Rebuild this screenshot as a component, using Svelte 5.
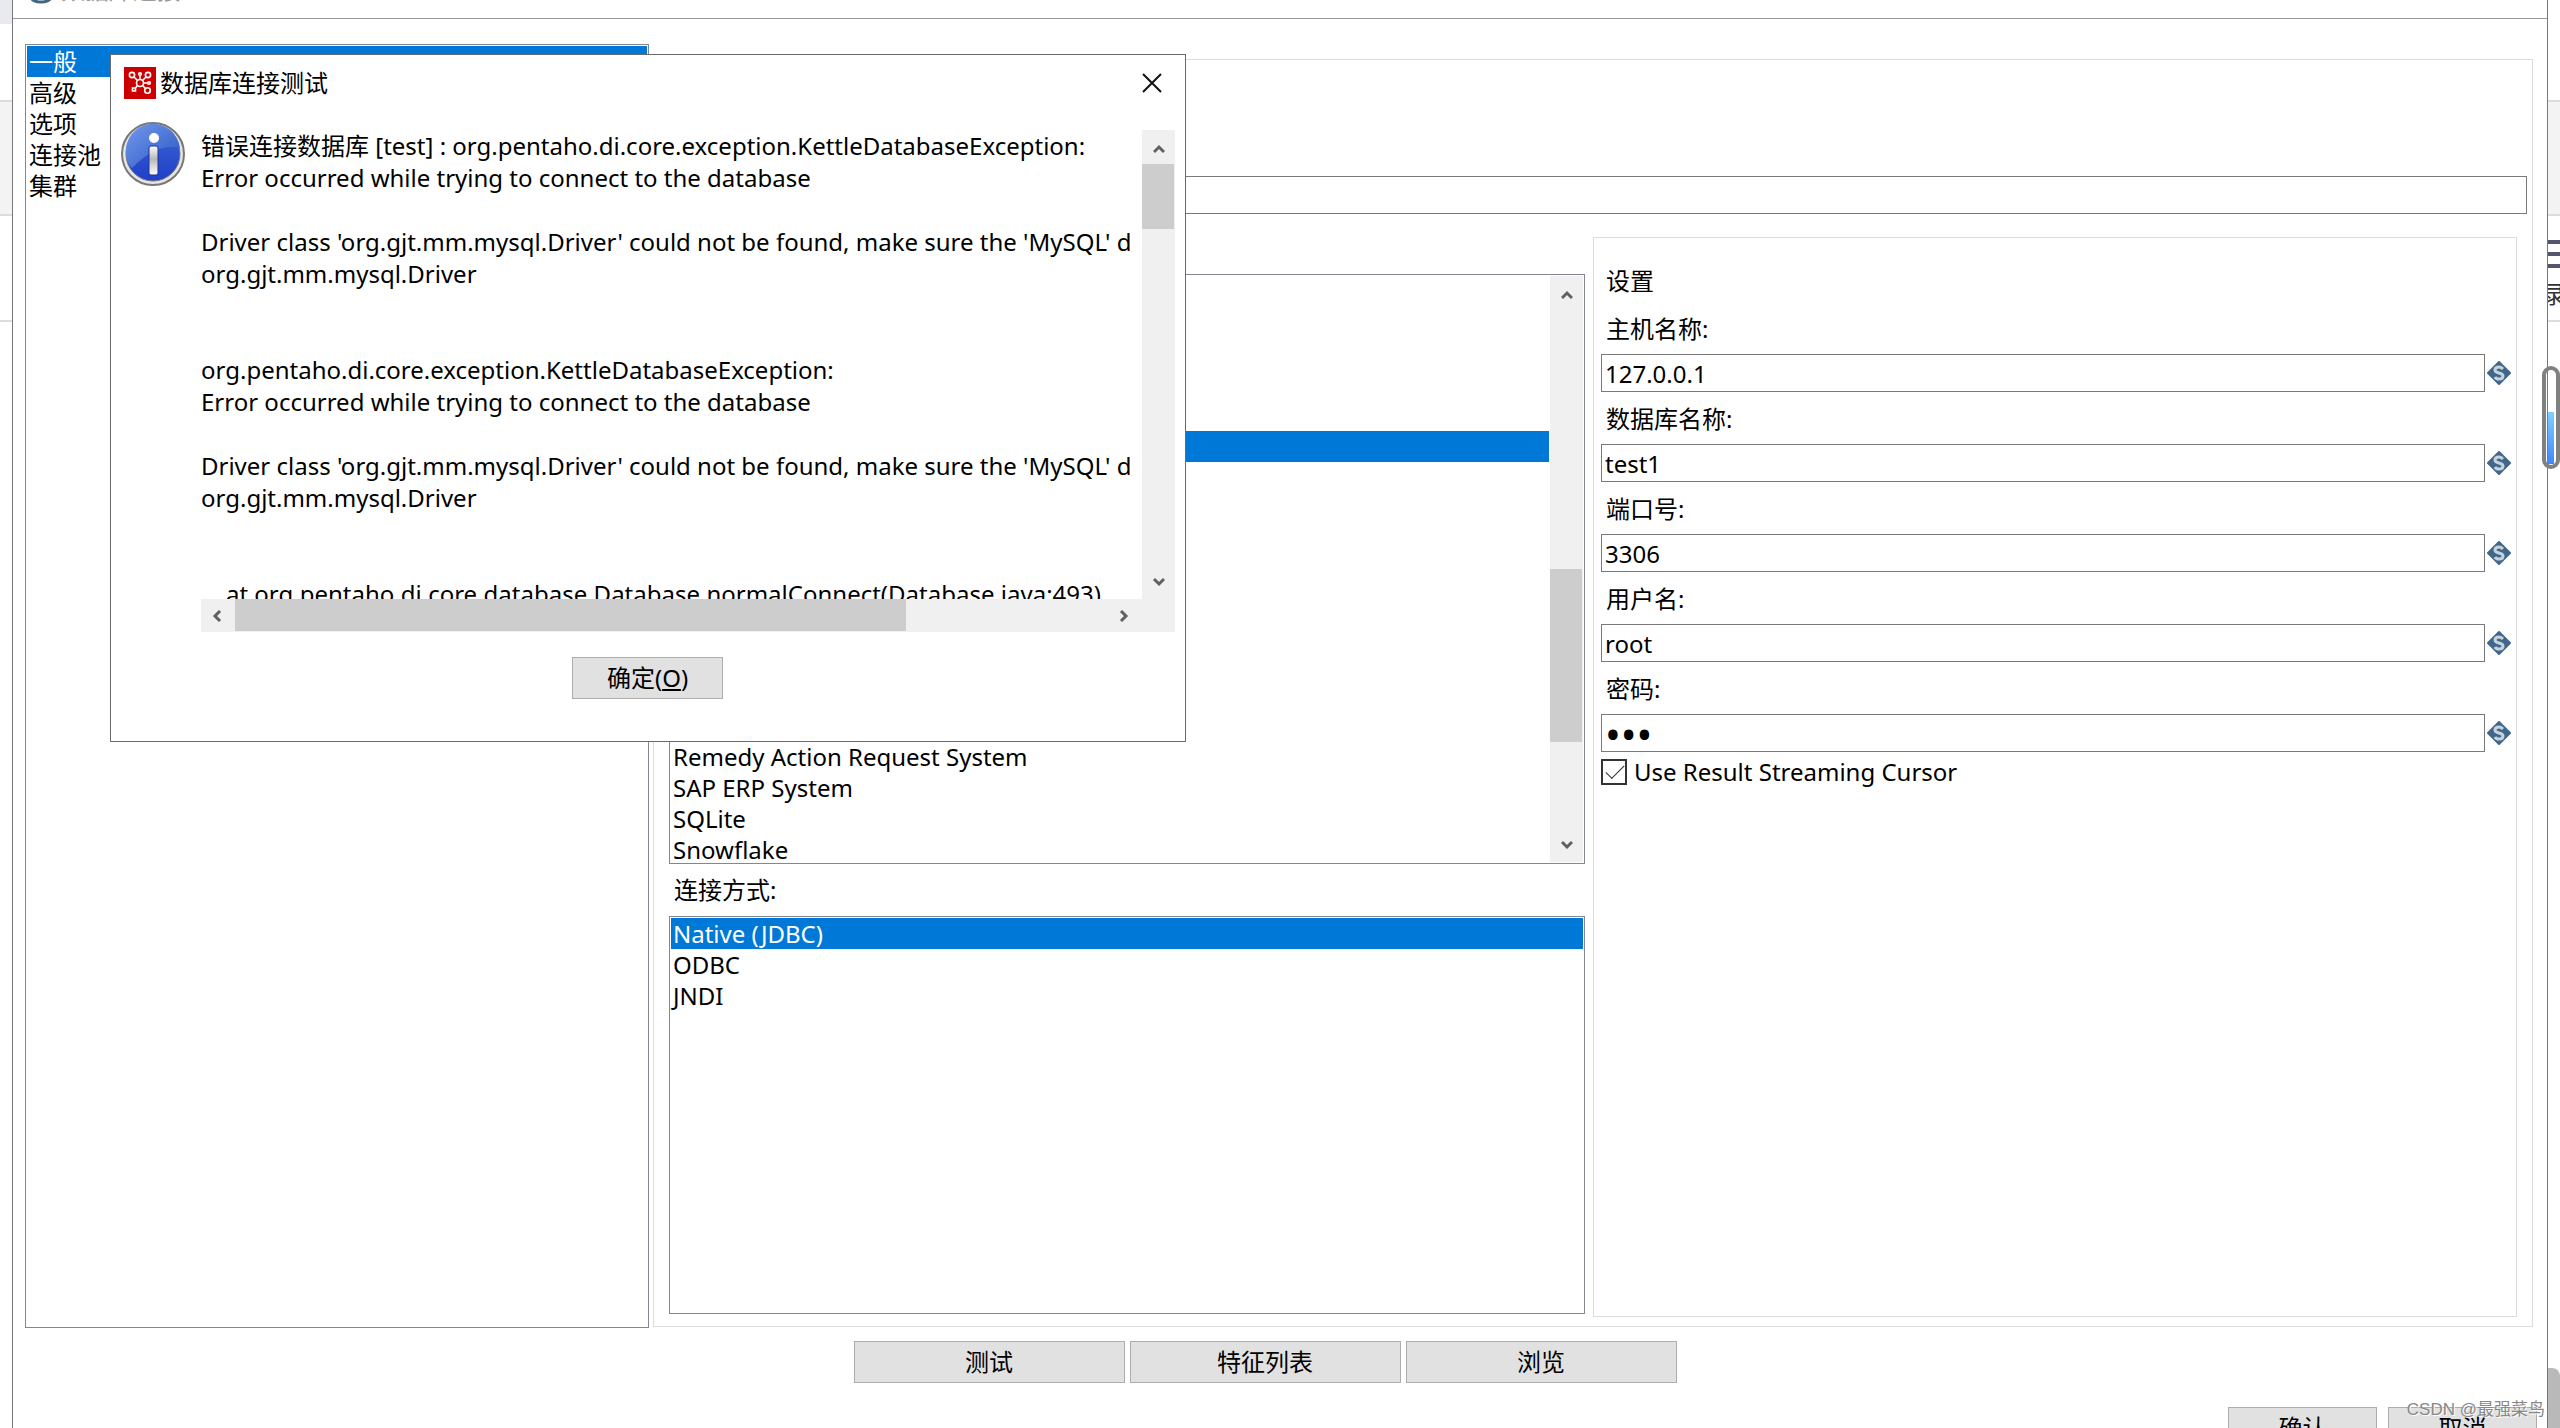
<script>
  const categories = ['一般', '高级', '选项', '连接池', '集群'];
  const databaseTypes = ['', '', '', '', '', '', '', '', '', '', '', '', '', '', '', 'Remedy Action Request System', 'SAP ERP System', 'SQLite', 'Snowflake'];
  const accessTypes = ['Native (JDBC)', 'ODBC', 'JNDI'];
  const fields = [
    { id: 'host', label: '主机名称:', value: '127.0.0.1', type: 'text' },
    { id: 'database', label: '数据库名称:', value: 'test1', type: 'text' },
    { id: 'port', label: '端口号:', value: '3306', type: 'text' },
    { id: 'user', label: '用户名:', value: 'root', type: 'text' },
    { id: 'password', label: '密码:', value: 'abc', type: 'password' }
  ];
  const actions = ['测试', '特征列表', '浏览'];
  const message = `错误连接数据库 [test] : org.pentaho.di.core.exception.KettleDatabaseException:
Error occurred while trying to connect to the database

Driver class 'org.gjt.mm.mysql.Driver' could not be found, make sure the 'MySQL' driver
org.gjt.mm.mysql.Driver


org.pentaho.di.core.exception.KettleDatabaseException:
Error occurred while trying to connect to the database

Driver class 'org.gjt.mm.mysql.Driver' could not be found, make sure the 'MySQL' driver
org.gjt.mm.mysql.Driver


    at org.pentaho.di.core.database.Database.normalConnect(Database.java:493)`;

  let category = $state(0);
  let databaseType = $state(5);
  let accessType = $state(0);
  let streaming = $state(true);
</script>

{#snippet arrow(d)}
  <svg class="arrow" viewBox="0 0 12 12" aria-hidden="true"><path {d} /></svg>
{/snippet}

<div class="page">
  <div class="strip left">
    <div class="tabs"></div>
    <div class="blank"></div>
    <div class="ribbon"></div>
    <div class="tools"></div>
  </div>

  <main class="window">
    <header class="titlebar">
      <svg class="db" viewBox="0 0 24 24" aria-hidden="true">
        <ellipse cx="12" cy="17" rx="10" ry="5" fill="#fff" stroke="#436783" stroke-width="3" />
      </svg>
      <span>数据库连接</span>
    </header>

    <div class="content">
      <ul class="listbox nav" role="listbox" aria-label="类别">
        {#each categories as name, i}
          <li><button role="option" aria-selected={i === category} class:selected={i === category} onclick={() => (category = i)}>{name}</button></li>
        {/each}
      </ul>

      <section class="group general">
        <input class="box name" type="text" aria-label="连接名称" />
        <div class="columns">
          <div class="types">
            <div class="scroller">
              <ul class="listbox" role="listbox" aria-label="连接类型">
                {#each databaseTypes as name, i}
                  <li><button role="option" aria-selected={i === databaseType} class:selected={i === databaseType} onclick={() => (databaseType = i)}>{name}</button></li>
                {/each}
              </ul>
              <div class="vbar">
                {@render arrow('M1 9 6 4 11 9')}
                <div class="track list-track"><div class="thumb"></div></div>
                {@render arrow('M1 3 6 8 11 3')}
              </div>
            </div>
            <div class="caption">连接方式:</div>
            <ul class="listbox access" role="listbox" aria-label="连接方式">
              {#each accessTypes as name, i}
                <li><button role="option" aria-selected={i === accessType} class:selected={i === accessType} onclick={() => (accessType = i)}>{name}</button></li>
              {/each}
            </ul>
          </div>

          <section class="group settings">
            <h2>设置</h2>
            <div class="fields">
              {#each fields as f}
                <div class="field">
                  <label for={f.id}>{f.label}</label>
                  <div class="entry">
                    <input class="box" id={f.id} type={f.type} value={f.value} />
                    <svg class="var" viewBox="0 0 24 24" aria-hidden="true">
                      <path d="M12 1 23 12 12 23 1 12Z" fill="#41678a" stroke="#41678a" stroke-width="2" stroke-linejoin="round" />
                      <path d="M16 8Q14 6 12 6Q8 6 8 9Q8 11 12 12Q16 13 16 15Q16 18 12 18Q9 18 8 16" fill="none" stroke="#c6d2dc" stroke-width="3" />
                    </svg>
                  </div>
                </div>
              {/each}
            </div>
            <label class="check">
              <input type="checkbox" bind:checked={streaming} />
              <span>Use Result Streaming Cursor</span>
            </label>
          </section>
        </div>
      </section>
    </div>

    <div class="actions">
      {#each actions as a}<button class="btn">{a}</button>{/each}
    </div>
    <footer>
      <button class="btn">确认</button>
      <button class="btn">取消</button>
    </footer>
  </main>

  <div class="strip right">
    <div class="blank top"></div>
    <div class="ribbon"></div>
    <div class="tools">
      <svg viewBox="0 0 12 32" aria-hidden="true"><path d="M0 4H12M0 16H12M0 28H12" stroke="#55566b" stroke-width="4" /></svg>
      <span>录</span>
    </div>
    <div class="page-thumb"></div>
  </div>

  <div class="gauge"><div></div></div>

  <div class="dialog" role="dialog" aria-labelledby="dialog-title">
    <header>
      <svg class="logo" viewBox="0 0 32 32" aria-hidden="true">
        <rect width="32" height="32" fill="#c00" />
        <g fill="none" stroke="#fff" stroke-width="1.6">
          <circle cx="16" cy="16" r="3.5" />
          <circle cx="8" cy="8" r="2.6" />
          <circle cx="24" cy="8" r="2.6" />
          <circle cx="23.5" cy="23.5" r="2.8" />
          <circle cx="16" cy="7" r="1.3" />
          <circle cx="25" cy="16" r="1.3" />
          <path d="M8.500 21h3v3h-3zM10 10l3.500 3.500M22 10l-3.500 3.500M18.500 18.500l3 3M13.500 18.500l-2 2.500M16 8.500v4M19.500 16h4" />
        </g>
      </svg>
      <span id="dialog-title">数据库连接测试</span>
      <button class="close" aria-label="关闭">
        <svg viewBox="0 0 20 20" aria-hidden="true"><path d="M1 1 19 19M19 1 1 19" fill="none" stroke="#111" stroke-width="2" /></svg>
      </button>
    </header>
    <div class="message">
      <svg class="info" viewBox="0 0 64 64" aria-hidden="true">
        <defs>
          <linearGradient id="ball" x1="0" y1="0" x2="0" y2="1">
            <stop offset="0" stop-color="#3b66d4" /><stop offset="1" stop-color="#1f3fc8" />
          </linearGradient>
          <linearGradient id="shine" x1="0" y1="0" x2="1" y2="1">
            <stop offset="0" stop-color="#7299ee" /><stop offset="1" stop-color="#2c56c2" />
          </linearGradient>
          <linearGradient id="stem" x1="0" y1="0" x2="0" y2="1">
            <stop offset="0" stop-color="#fff" /><stop offset=".45" stop-color="#b8b8b8" /><stop offset="1" stop-color="#fff" />
          </linearGradient>
        </defs>
        <circle cx="32" cy="32" r="31" fill="#e4e4e4" stroke="#777" stroke-width="2" />
        <circle cx="32" cy="32" r="27" fill="url(#ball)" stroke="#777" stroke-width="1" />
        <path d="M5 32A27 27 0 0 1 59 26Q36 20 11 46Q5 40 5 32Z" fill="url(#shine)" />
        <circle cx="33" cy="16" r="5" fill="#fff" />
        <rect x="28" y="24" width="9" height="29" rx="2" fill="url(#stem)" stroke="#1b349b" stroke-width="1" />
      </svg>
      <div class="pane">
        <pre>{message}</pre>
        <div class="vbar">
          {@render arrow('M1 9 6 4 11 9')}
          <div class="track"><div class="thumb"></div></div>
          {@render arrow('M1 3 6 8 11 3')}
        </div>
        <div class="hbar">
          {@render arrow('M9 1 4 6 9 11')}
          <div class="track"><div class="thumb"></div></div>
          {@render arrow('M3 1 8 6 3 11')}
        </div>
      </div>
    </div>
    <div class="confirm"><button class="btn">确定(<u>O</u>)</button></div>
  </div>

  <div class="watermark">CSDN @最强菜鸟</div>
</div>

<style>
  :global(body) {
    margin: 0;
    overflow: hidden;
    background: #fff;
  }
  .page, .page * { box-sizing: border-box; }
  .page {
    position: relative;
    display: grid;
    grid-template-columns: 12px minmax(0, 1fr) 12px;
    height: 100vh;
    overflow: hidden;
    color: #000;
    font: 24px/32px "Noto Sans", "Noto Sans CJK SC", sans-serif;
  }
  button, input {
    font: inherit;
    color: inherit;
    margin: 0;
  }
  svg { display: block; flex: none; }

  .strip { overflow: hidden; background: #fff; }
  .tabs { height: 24px; background: #e8eaed; }
  .blank { height: 76px; }
  .blank.top { height: 100px; }
  .ribbon {
    height: 116px;
    background: #f3f3f3;
    border: solid #dcdcdc;
    border-width: 2px 0;
  }
  .tools {
    height: 106px;
    padding-top: 22px;
    border-bottom: 2px solid #dcdcdc;
    overflow: hidden;
  }
  .tools svg { width: 12px; height: 32px; }
  .tools span {
    display: flex;
    justify-content: center;
    margin-top: 8px;
    color: #333;
  }
  .strip.right { display: flex; flex-direction: column; }
  .page-thumb {
    height: 80px;
    margin: auto 0 1px;
    background: #b9b9b9;
    border-radius: 0 8px 8px 0;
  }
  .gauge {
    position: absolute;
    top: 366px;
    right: 0;
    display: flex;
    align-items: flex-end;
    width: 18px;
    height: 103px;
    padding: 0 2px 1px;
    border: 4px solid #808080;
    border-radius: 9px;
  }
  .gauge div {
    width: 6px;
    height: 52px;
    background: linear-gradient(#7fd0ff, #3d87ff);
  }

  .window {
    border: solid #777;
    border-width: 0 1px;
    background: #fff;
  }
  .titlebar {
    display: flex;
    align-items: flex-end;
    gap: 8px;
    height: 19px;
    padding: 0 16px 14px;
    border-bottom: 1px solid #999;
    color: #999;
    line-height: 28px;
  }
  .db { width: 24px; height: 24px; }
  .content {
    display: grid;
    grid-template-columns: 156fr 470fr;
    gap: 4px;
    padding: 25px 14px 0 12px;
  }
  .listbox {
    margin: 0;
    padding: 1px;
    list-style: none;
    border: 1px solid #828790;
    background: #fff;
    overflow: hidden;
  }
  .listbox button {
    display: block;
    width: 100%;
    height: 31px;
    padding: 0 2px;
    border: 0;
    background: none;
    line-height: 31px;
    text-align: left;
  }
  .listbox button.selected { background: #0078d7; color: #fff; }

  .group { border: 1px solid #dcdcdc; }
  .general { margin: 15px 0 1px; padding: 116px 5px 9px 15px; }
  .box {
    display: block;
    width: 100%;
    height: 38px;
    padding: 0 3px;
    border: 1px solid #7a7a7a;
    border-radius: 0;
    background: #fff;
    outline: 0;
  }
  .box[type="password"] { font-size: 42px; }
  .columns {
    display: grid;
    grid-template-columns: 229fr 231fr;
    gap: 8px;
    padding: 23px 10px 0 0;
  }
  .types { padding: 37px 0 3px; }
  .scroller {
    display: grid;
    grid-template-columns: minmax(0, 1fr) 33px;
    height: 590px;
    padding: 1px;
    border: 1px solid #828790;
  }
  .scroller .listbox { border: 0; padding: 0 1px 0 0; min-height: 0; }
  .vbar {
    display: flex;
    flex-direction: column;
    align-items: center;
    justify-content: space-between;
    padding: 13px 0 11px;
    background: #f0f0f0;
  }
  .arrow { width: 12px; height: 12px; }
  .arrow path { fill: none; stroke: #606060; stroke-width: 3; }
  .track { flex: 1; align-self: stretch; }
  .thumb { background: #cdcdcd; }
  .vbar .track { padding: 9px 1px 0 0; }
  .vbar .thumb { height: 65px; }
  .vbar .list-track { padding-top: 268px; }
  .list-track .thumb { height: 173px; }
  .caption { padding: 10px 5px; }
  .access { height: 398px; }

  .settings { padding: 27px 5px 0 7px; }
  h2 {
    margin: 0 0 16px;
    padding-left: 5px;
    font: inherit;
  }
  .fields { display: grid; gap: 11px; }
  .field { display: grid; gap: 9px; }
  .field label { padding-left: 5px; }
  .entry { display: flex; gap: 2px; align-items: center; }
  .var { width: 24px; height: 24px; }
  .check {
    display: flex;
    align-items: center;
    gap: 7px;
    height: 26px;
    margin-top: 7px;
  }
  .check input {
    appearance: none;
    width: 26px;
    height: 26px;
    border: 2px solid #333;
    background: #fff;
  }
  .check input:checked::before {
    content: "";
    display: block;
    width: 17px;
    height: 8px;
    margin: 4px 0 0 3px;
    border: solid #333;
    border-width: 0 0 1px 1px;
    rotate: -45deg;
  }

  .btn {
    height: 42px;
    padding: 0;
    border: 1px solid #adadad;
    background: #e1e1e1;
  }
  .actions {
    display: flex;
    justify-content: center;
    gap: 5px;
    padding: 13px 30px 24px 0;
  }
  .actions .btn { width: 271px; }
  footer {
    display: flex;
    justify-content: flex-end;
    gap: 11px;
    padding-right: 10px;
  }
  footer .btn { width: 149px; }

  .dialog {
    position: absolute;
    top: 54px;
    left: 110px;
    width: 1076px;
    height: 688px;
    border: 1px solid #6a6a6a;
    background: #fff;
  }
  .dialog header {
    display: flex;
    align-items: center;
    gap: 4px;
    padding: 12px 23px 0 13px;
  }
  .logo { width: 32px; height: 32px; }
  .close {
    margin-left: auto;
    padding: 0;
    border: 0;
    background: none;
  }
  .close svg { width: 20px; height: 20px; }
  .message {
    display: flex;
    gap: 16px;
    padding: 23px 10px 0;
  }
  .info { width: 64px; height: 64px; }
  .pane {
    display: grid;
    grid-template: 469px 33px / minmax(0, 1fr) 33px;
    flex: 1;
    min-width: 0;
    margin-top: 8px;
  }
  pre {
    margin: 0 12px 0 0;
    overflow: hidden;
    font: inherit;
    white-space: pre;
  }
  .hbar {
    grid-column: 1 / -1;
    display: flex;
    align-items: center;
    padding: 0 45px 0 10px;
    background: #f0f0f0;
  }
  .hbar .track { padding: 0 0 1px 12px; }
  .hbar .thumb { width: 671px; height: 32px; }
  .confirm {
    display: flex;
    justify-content: center;
    padding: 25px 1px 0 0;
  }
  .confirm .btn { width: 151px; }

  .watermark {
    position: absolute;
    right: 15px;
    bottom: 4px;
    color: #888;
    font-family: "Liberation Sans", "Noto Sans CJK SC", sans-serif;
    font-size: 17px;
    line-height: 28px;
    text-shadow: 1px 1px 0 #fff;
  }
</style>
